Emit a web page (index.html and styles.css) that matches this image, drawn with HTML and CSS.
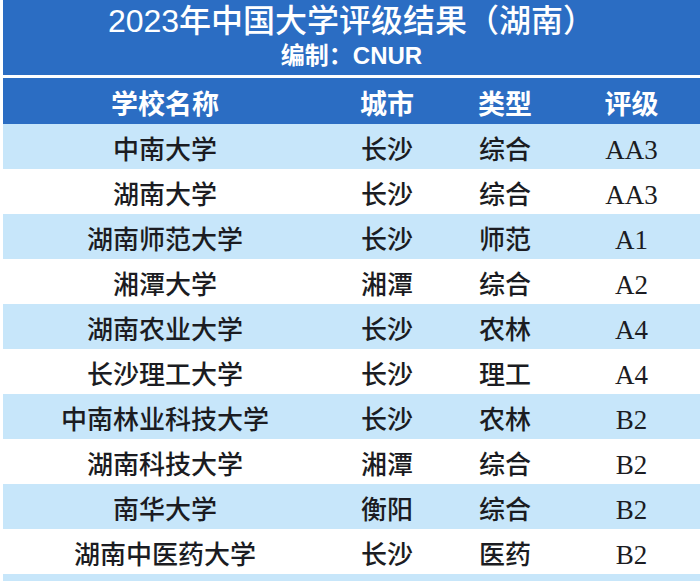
FILE: index.html
```html
<!DOCTYPE html>
<html lang="zh-CN">
<head>
<meta charset="utf-8">
<title>2023年中国大学评级结果（湖南）</title>
<link rel="stylesheet" href="styles.css">
</head>
<body>
<div class="sheet">
  <header class="banner">
    <h1 class="title">2023年中国大学评级结果（湖南）</h1>
    <p class="subtitle">编制：CNUR</p>
  </header>
  <div class="row head">
    <div>学校名称</div><div>城市</div><div>类型</div><div>评级</div>
  </div>
  <div class="row alt"><div>中南大学</div><div>长沙</div><div>综合</div><div class="grade">AA3</div></div>
  <div class="row"><div>湖南大学</div><div>长沙</div><div>综合</div><div class="grade">AA3</div></div>
  <div class="row alt"><div>湖南师范大学</div><div>长沙</div><div>师范</div><div class="grade">A1</div></div>
  <div class="row"><div>湘潭大学</div><div>湘潭</div><div>综合</div><div class="grade">A2</div></div>
  <div class="row alt"><div>湖南农业大学</div><div>长沙</div><div>农林</div><div class="grade">A4</div></div>
  <div class="row"><div>长沙理工大学</div><div>长沙</div><div>理工</div><div class="grade">A4</div></div>
  <div class="row alt"><div>中南林业科技大学</div><div>长沙</div><div>农林</div><div class="grade">B2</div></div>
  <div class="row"><div>湖南科技大学</div><div>湘潭</div><div>综合</div><div class="grade">B2</div></div>
  <div class="row alt"><div>南华大学</div><div>衡阳</div><div>综合</div><div class="grade">B2</div></div>
  <div class="row"><div>湖南中医药大学</div><div>长沙</div><div>医药</div><div class="grade">B2</div></div>
  <div class="row alt"><div></div><div></div><div></div><div></div></div>
</div>
</body>
</html>
```
FILE: styles.css
```css
html, body {
  margin: 0;
  padding: 0;
  background: #ffffff;
}
.sheet {
  padding-left: 3px;
  width: 697px;
  overflow: hidden;
  height: 581px;
}
.banner {
  background: #2b6dc3;
  height: 75px;
  color: #ffffff;
  text-align: center;
  display: flex;
  flex-direction: column;
  align-items: center;
  margin-bottom: 3px;
  font-family: "Liberation Sans", "Noto Sans CJK SC", sans-serif;
}
.title {
  margin: 0;
  padding-top: 2px;
  font-size: 32px;
  line-height: 38px;
  font-weight: 500;
  letter-spacing: 0;
}
.subtitle {
  margin: 0;
  padding-top: 2px;
  font-size: 24px;
  line-height: 28px;
  font-weight: 700;
}
.row {
  display: grid;
  grid-template-columns: 324px 120px 116px 1fr;
  height: 45px;
  align-items: center;
  text-align: center;
  font-family: "Liberation Serif", "Noto Sans CJK SC", serif;
  font-size: 26px;
  font-weight: 500;
  line-height: 45px;
  color: #1b1c22;
  padding-top: 4px;
  box-sizing: border-box;
}
.row.alt {
  background: #c7e6fa;
}
.row.head {
  background: #2b6dc3;
  color: #ffffff;
  height: 46px;
  font-weight: 700;
  font-size: 27px;
  padding-top: 2px;
  font-family: "Noto Sans CJK SC", sans-serif;
}
.grade {
  font-size: 27px;
}
```
